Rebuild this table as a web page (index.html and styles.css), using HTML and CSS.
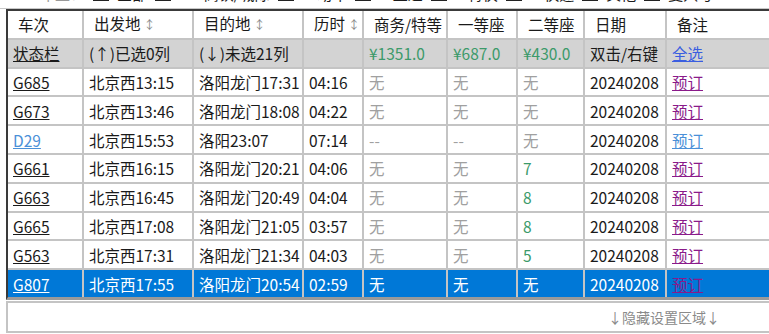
FILE: index.html
```html
<!DOCTYPE html>
<html lang="zh">
<head>
<meta charset="utf-8">
<link rel="stylesheet" href="styles.css">
</head>
<body>
<div class="page">
  <div class="topstrip">
    <div class="topline">
      <span class="faded">车型：</span>
      <span class="cb"></span><span>全部</span>
      <span class="cb"></span><span>GC-高铁/城际</span>
      <span class="cb"></span><span>D-动车</span>
      <span class="cb"></span><span>Z-直达</span>
      <span class="cb"></span><span>T-特快</span>
      <span class="cb"></span><span>K-快速</span>
      <span class="cb"></span><span>其他</span>
      <span class="cb"></span><span>复兴号</span>
    </div>
  </div>
  <div class="tablewrap">
    <table class="grid">
      <colgroup>
        <col class="c1"><col class="c2"><col class="c3"><col class="c4"><col class="c5"><col class="c6"><col class="c7"><col class="c8"><col class="c9">
      </colgroup>
      <thead>
        <tr class="head">
          <th>车次</th><th>出发地<span class="sort">↕</span></th><th>目的地<span class="sort">↕</span></th><th>历时<span class="sort">↕</span></th><th>商务/特等</th><th>一等座</th><th>二等座</th><th>日期</th><th>备注</th>
        </tr>
      </thead>
      <tbody>
        <tr class="status">
          <td><a class="lk-black">状态栏</a></td><td>(↑)已选0列</td><td>(↓)未选21列</td><td></td><td class="price">¥1351.0</td><td class="price">¥687.0</td><td class="price">¥430.0</td><td>双击/右键</td><td><a class="lk-blue">全选</a></td>
        </tr>
        <tr>
          <td><a class="lk-black">G685</a></td><td>北京西13:15</td><td>洛阳龙门17:31</td><td>04:16</td><td class="none">无</td><td class="none">无</td><td class="none">无</td><td>20240208</td><td><a class="lk-purple">预订</a></td>
        </tr>
        <tr>
          <td><a class="lk-black">G673</a></td><td>北京西13:46</td><td>洛阳龙门18:08</td><td>04:22</td><td class="none">无</td><td class="none">无</td><td class="none">无</td><td>20240208</td><td><a class="lk-purple">预订</a></td>
        </tr>
        <tr>
          <td><a class="lk-light">D29</a></td><td>北京西15:53</td><td>洛阳23:07</td><td>07:14</td><td class="none">--</td><td class="none">--</td><td class="none">无</td><td>20240208</td><td><a class="lk-light">预订</a></td>
        </tr>
        <tr>
          <td><a class="lk-black">G661</a></td><td>北京西16:15</td><td>洛阳龙门20:21</td><td>04:06</td><td class="none">无</td><td class="none">无</td><td class="num">7</td><td>20240208</td><td><a class="lk-purple">预订</a></td>
        </tr>
        <tr>
          <td><a class="lk-black">G663</a></td><td>北京西16:45</td><td>洛阳龙门20:49</td><td>04:04</td><td class="none">无</td><td class="none">无</td><td class="num">8</td><td>20240208</td><td><a class="lk-purple">预订</a></td>
        </tr>
        <tr>
          <td><a class="lk-black">G665</a></td><td>北京西17:08</td><td>洛阳龙门21:05</td><td>03:57</td><td class="none">无</td><td class="none">无</td><td class="num">8</td><td>20240208</td><td><a class="lk-purple">预订</a></td>
        </tr>
        <tr>
          <td><a class="lk-black">G563</a></td><td>北京西17:31</td><td>洛阳龙门21:34</td><td>04:03</td><td class="none">无</td><td class="none">无</td><td class="num">5</td><td>20240208</td><td><a class="lk-purple">预订</a></td>
        </tr>
        <tr class="selected">
          <td><a class="lk-white">G807</a></td><td>北京西17:55</td><td>洛阳龙门20:54</td><td>02:59</td><td>无</td><td>无</td><td>无</td><td>20240208</td><td><a class="lk-purple">预订</a></td>
        </tr>
      </tbody>
    </table>
  </div>
  <div class="hidebar"><span class="hidetext">↓隐藏设置区域↓</span></div>
  <div class="nextbox"></div>
</div>
</body>
</html>
```

FILE: styles.css
```css
html, body {
  margin: 0;
  padding: 0;
  background: #ffffff;
  overflow: hidden;
}
body {
  width: 769px;
  height: 334px;
  font-family: "Noto Sans CJK SC", "Noto Sans", sans-serif;
  color: #1a1a1a;
}
.page {
  display: flex;
  flex-direction: column;
  padding-left: 6px;
}
.topstrip {
  height: 8px;
  overflow: hidden;
  border-bottom: 1px solid #c8c8c8;
  margin-left: -6px;
}
.topline {
  display: flex;
  align-items: flex-end;
  gap: 8px;
  margin-top: -14px;
  padding-left: 40px;
  height: 16px;
  font-size: 15px;
  line-height: 16px;
  white-space: nowrap;
}
.topline .faded { color: #999; }
.cb {
  display: inline-block;
  width: 12px;
  height: 12px;
  border: 2px solid #222;
  margin-bottom: 1px;
}
.tablewrap {
  width: 900px;
  border-top: 2px solid #3a3a3a;
  border-left: 2px solid #3a3a3a;
  border-bottom: 3px solid #9a9a9a;
}
.grid {
  border-collapse: collapse;
  table-layout: fixed;
  width: 880px;
  font-size: 15.5px;
}
.c1 { width: 75px; }
.c2 { width: 110px; }
.c3 { width: 110px; }
.c4 { width: 60px; }
.c5 { width: 84px; }
.c6 { width: 70px; }
.c7 { width: 67px; }
.c8 { width: 82px; }
.c9 { width: 222px; }
.grid th, .grid td {
  height: 26.8px;
  padding: 0 0 0 5px;
  border: 2px solid #c4c4c4;
  text-align: left;
  white-space: nowrap;
  overflow: hidden;
  line-height: 20px;
}
.grid tr:first-child th, .grid tr:first-child td { border-top: none; }
.grid th:first-child, .grid td:first-child { border-left: none; }
.grid tr:last-child td { border-bottom: none; }
.grid th {
  font-weight: normal;
  padding-left: 10px;
  color: #1a1a1a;
}
.sort {
  color: #888;
  font-size: 12px;
  margin-left: 3px;
}
.status td { background: #d3d3d3; }
.status td:first-child { padding-left: 5px; }
.price { color: #3c9a6a; }
.none { color: #a0a0a0; }
.num { color: #3c9a6a; }
a { text-decoration: underline; cursor: pointer; }
.lk-black { color: #1a1a1a; }
.lk-blue { color: #3a5ee0; }
.lk-light { color: #4a90d8; }
.lk-purple { color: #8a1a8a; }
.lk-white { color: #ffffff; }
.selected td {
  background: #0078d7;
  color: #ffffff;
}
.hidebar {
  height: 28px;
  border: 2px solid #c4c4c4;
  border-right: none;
  margin-top: 1px;
  display: flex;
  align-items: center;
  padding-left: 600px;
}
.hidetext {
  color: #8a8a8a;
  font-size: 14px;
}
.nextbox {
  height: 10px;
  border-top: 2px solid #c4c4c4;
  border-left: 2px solid #c4c4c4;
  margin-top: 1px;
}
```
